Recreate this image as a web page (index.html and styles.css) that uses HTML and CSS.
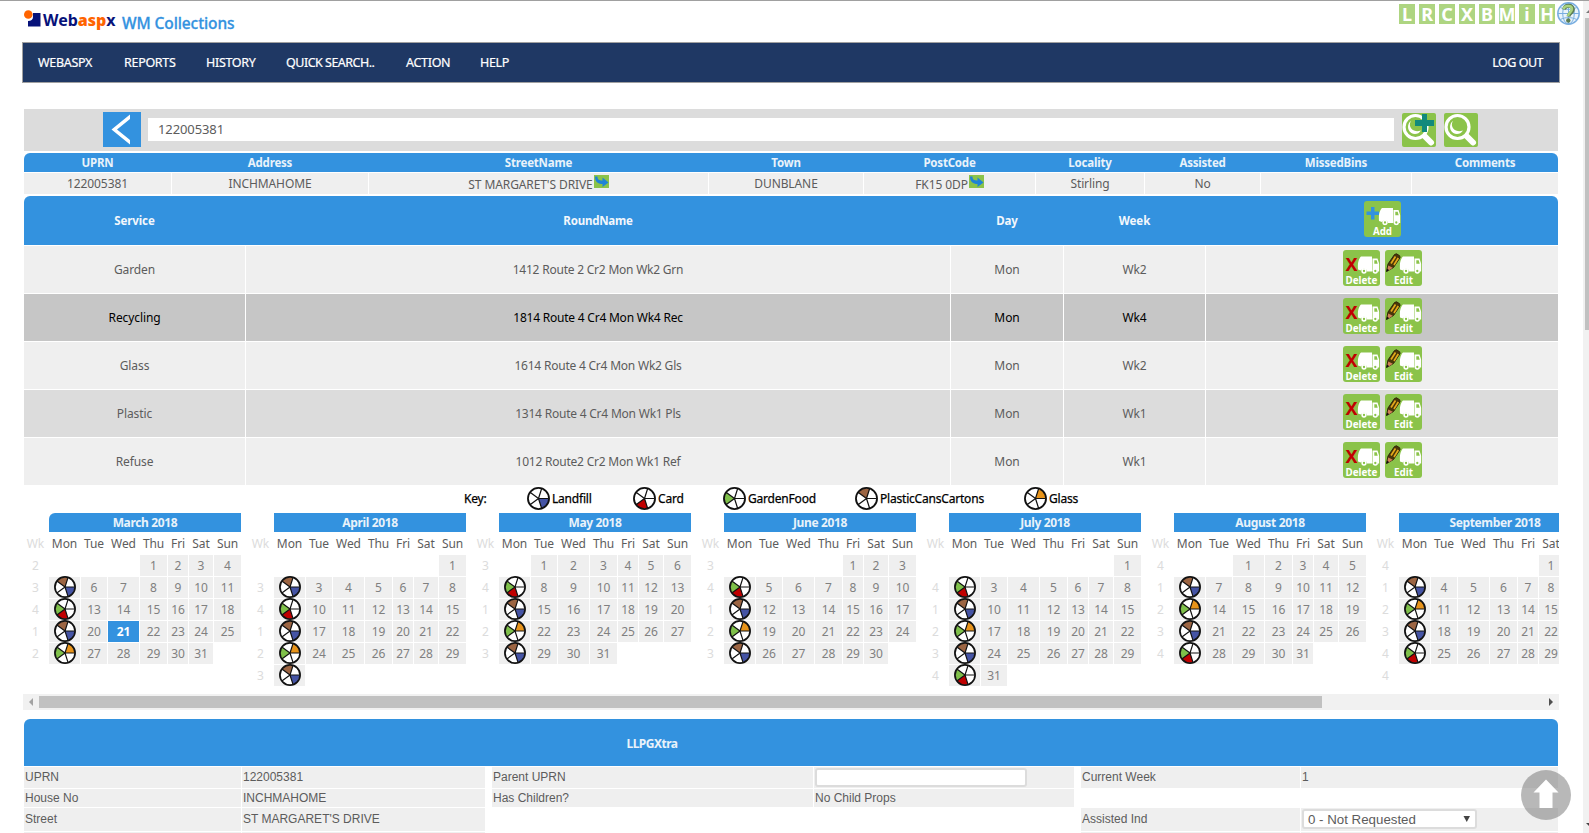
FILE: index.html
```html
<!DOCTYPE html>
<html lang="en">
<head>
<meta charset="utf-8">
<title>WM Collections</title>
<link rel="stylesheet" href="styles.css">
</head>
<body>
<svg class="defs" aria-hidden="true">
  <symbol id="truck" viewBox="0 0 22 18">
    <path d="M3.500.5H14.500V15.500H9.500a3.200 3.200 0 0 0-6-1L.5 13.500C-.2 9 .8 3 3.500.5z" fill="#fff"/>
    <path d="M15 2.500h5l1.800 5.500v7.500h-1.300a3 3 0 0 0-5.500 0z" fill="#fff"/>
    <path d="M16.800 4.300h2.400l1 3.400h-3.400z" fill="#8bc34a"/>
    <circle cx="6.500" cy="15" r="1.900" fill="#8bc34a" stroke="#fff" stroke-width="1.500"/>
    <circle cx="17.800" cy="15" r="1.900" fill="#8bc34a" stroke="#fff" stroke-width="1.500"/>
  </symbol>
  <symbol id="pencil" viewBox="0 0 16 20">
    <path d="M1 18.500L2.500 11 9 1.500 11 .8l3.200 2 .3 2L8 14.500z" fill="#4a3608" stroke="#30250a"/>
    <path d="M5.500 10.500l4.500-7M8.500 12l4.300-7" stroke="#e2a81b" stroke-width="1.700"/>
    <path d="M2.700 12.500l4.600 2.300-4 2.600-1.300-.8z" fill="#d08055"/>
    <path d="M1 18.800l.6-3 2 1.300z" fill="#111"/>
  </symbol>
  <symbol id="seg-l" viewBox="0 0 24 24"><path d="M12 12H22.500A10.500 10.500 0 0 1 15.200 22z" fill="#4554a5"/></symbol>
  <symbol id="seg-c" viewBox="0 0 24 24"><path d="M12 12L15.200 22A10.500 10.500 0 0 1 3.500 18.200z" fill="#c00000"/></symbol>
  <symbol id="seg-f" viewBox="0 0 24 24"><path d="M12 12L3.500 18.200A10.500 10.500 0 0 1 3.500 5.800z" fill="#7fc04a"/></symbol>
  <symbol id="seg-p" viewBox="0 0 24 24"><path d="M12 12L3.500 5.800A10.500 10.500 0 0 1 15.200 2z" fill="#9c6543"/></symbol>
  <symbol id="seg-g" viewBox="0 0 24 24"><path d="M12 12L15.200 2A10.500 10.500 0 0 1 22.500 12z" fill="#e8941a"/></symbol>
  <symbol id="wheel" viewBox="0 0 24 24">
    <path d="M12 12H22.500M12 12L15.200 2M12 12L3.500 5.800M12 12L3.500 18.200M12 12L15.200 22" stroke="#111" stroke-width="1.300"/>
    <circle cx="12" cy="12" r="11" fill="none" stroke="#111" stroke-width="1.900"/>
  </symbol>
  <symbol id="lens" viewBox="0 0 34 34">
    <path d="M21.500 22l7.500 7.500" stroke="#fff" stroke-width="6" stroke-linecap="round"/>
    <circle cx="13.500" cy="14" r="11.500" fill="#8bc34a" stroke="#fff" stroke-width="3.200"/>
    <path d="M9 8c-3 4 0 12.500 10 9.500-3 5-10 4.500-12.300-.5C5.500 14 6 10 9 8z" fill="#fff"/>
  </symbol>
  <symbol id="jump" viewBox="0 0 15 13">
    <path d="M0 0h15v13H0z" fill="#8bc34a"/>
    <path d="M1 1.500h2.500c0 3 1.500 4 5 4V2.500l6 5-6 4.500V9C4 9 1 7 1 1.500z" fill="#1f83d6"/>
  </symbol>
</svg>

<div class="page">
  <header class="brand">
    <svg class="mark" width="17" height="17" viewBox="0 0 17 17"><path d="M9 3h7.500v13.500H4V11c3 0 5-1.500 5-4z" fill="#07127a"/><circle cx="4.300" cy="4.500" r="4.300" fill="#ff6400"/></svg>
    <span class="logo">Web<b>asp</b>x</span>
    <span class="product">WM Collections</span>
    <div class="tiles">
      <i>L</i><i>R</i><i>C</i><i>X</i><i>B</i><i>M</i><i>i</i><i>H</i>
      <svg width="23" height="23" viewBox="0 0 23 23"><circle cx="11.500" cy="11.500" r="10.700" fill="#e8f3fb" stroke="#79aee0" stroke-width="1.500"/><path d="M1 11.500h21M11.500 1v21M3.500 5.500c4 2.500 12 2.500 16 0M3.500 17.500c4-2.500 12-2.500 16 0" fill="none" stroke="#79aee0"/><ellipse cx="11.500" cy="11.500" rx="5.800" ry="10.500" fill="none" stroke="#79aee0"/><path d="M7 7.500C8 2.500 16 2.500 16 7.500c0 3-4 3.500-4.500 7" fill="none" stroke="#5d7d55" stroke-width="3.800"/><path d="M6.500 7C7.500 3 15 3 15 7c0 3-3.500 3.500-4 7" fill="none" stroke="#a9d37e" stroke-width="2.500"/><circle cx="11.300" cy="18.500" r="2.200" fill="#5d7d55"/></svg>
    </div>
  </header>

  <nav class="nav">
    <a class="n1">WEBASPX</a><a class="n2">REPORTS</a><a class="n3">HISTORY</a><a class="n4">QUICK SEARCH..</a><a class="n5">ACTION</a><a class="n6">HELP</a><a class="out">LOG OUT</a>
  </nav>

  <div class="search">
    <div class="back"><svg width="38" height="35" viewBox="0 0 38 35"><path d="M27 2.500v4.500L14 17.500 27 28v4.500L8.500 17.500z" fill="#fff"/></svg></div>
    <div class="field">122005381</div>
    <svg class="sq first" width="34" height="34"><use href="#lens"/><path d="M20 1h5v6h7v6h-7v6h-5v-6h-7V7h7z" fill="#128a7c"/></svg>
    <svg class="sq second" width="34" height="34"><use href="#lens"/></svg>
  </div>

  <div class="prop head"><span>UPRN</span><span>Address</span><span>StreetName</span><span>Town</span><span>PostCode</span><span>Locality</span><span>Assisted</span><span>MissedBins</span><span>Comments</span></div>
  <div class="prop vals"><span>122005381</span><span>INCHMAHOME</span><span>ST MARGARET'S DRIVE<svg width="15" height="13"><use href="#jump"/></svg></span><span>DUNBLANE</span><span>FK15 0DP<svg width="15" height="13"><use href="#jump"/></svg></span><span>Stirling</span><span>No</span><span></span><span></span></div>

  <div class="svc top"><span>Service</span><span>RoundName</span><span>Day</span><span>Week</span><span class="acts"><svg class="btn" width="37" height="36" viewBox="0 0 37 36"><path d="M7 6h3.500v4.500H15V14h-4.500v4.500H7V14H2.500v-3.500H7z" fill="#3392df"/><use href="#truck" x="14.500" y="6.500" width="22" height="18"/><text x="18.500" y="34" textLength="19" lengthAdjust="spacingAndGlyphs">Add</text></svg></span></div>
  <div id="services"></div>

  <div class="key" id="key"><strong>Key:</strong></div>
  <div class="months" id="months"></div>
  <div class="hbar"><svg width="16" height="16"><path d="M10 4v8L6 8z" fill="#a3a3a3"/></svg><div class="thumb"></div><svg class="right" width="16" height="16"><path d="M6 4v8l4-4z" fill="#505050"/></svg></div>

  <section class="xtra">
    <h2>LLPGXtra</h2>
    <div class="cols">
      <div class="tbl t1"><span>UPRN</span><span>122005381</span><span>House No</span><span>INCHMAHOME</span><span>Street</span><span>ST MARGARET'S DRIVE</span><span></span><span></span></div>
      <div class="tbl t2"><span>Parent UPRN</span><span><input type="text" aria-label="Parent UPRN"></span><span>Has Children?</span><span>No Child Props</span></div>
      <div class="tbl t3"><span>Current Week</span><span>1</span><span class="none"></span><span class="none"></span><span>Assisted Ind</span><span><div class="select">0 - Not Requested<svg width="8" height="7"><path d="M.5 0h6.500L3.750 6z" fill="#444"/></svg></div></span><span></span><span></span></div>
    </div>
  </section>
</div>

<div class="totop"><svg width="50" height="50" viewBox="0 0 50 50"><path d="M25 9.500L37.500 22.500h-6V38h-13V22.500h-6z" fill="#fff"/></svg></div>
<div class="vbar"><svg width="6" height="17"><path d="M3 12l3-3v3z" fill="#777"/></svg><div class="vthumb"></div><svg width="6" height="17"><path d="M3 7h3v3z" fill="#444"/></svg></div>
<script src="app.js"></script>
</body>
</html>
```

FILE: styles.css
```css
* { box-sizing: border-box; }
body { margin: 0; width: 1589px; height: 833px; overflow: hidden; background: #fff; border-top: 1px solid #a0a0a0; font: 12px/16px "Noto Sans", sans-serif; color: #5c5c5c; letter-spacing: -0.1px; }
svg { display: block; flex: none; }
.defs { position: absolute; width: 0; height: 0; }
.page { width: 1534px; margin-left: 24px; }

.brand { display: flex; height: 41px; width: 1556px; }
.mark { margin-top: 9px; }
.logo { margin: 8px 0 0 2px; width: 73px; font: bold 16px/22px "Noto Sans", sans-serif; color: #07127a; letter-spacing: 0; }
.logo b { color: #ff6400; }
.product { margin: 11px 0 0 6px; white-space: nowrap; font: 500 15.500px/22px "Noto Sans", sans-serif; color: #3392df; letter-spacing: -0.1px; -webkit-text-stroke: 0.3px #3392df; }
.tiles { display: flex; gap: 4px; margin: 3px 0 0 auto; }
.tiles i { width: 16px; height: 20px; background: #aed581; color: #fff; font: bold 18px/20px "Noto Sans", sans-serif; text-align: center; display: flex; justify-content: center; }
.tiles svg { margin: -2px 0 0 -2px; }

.nav { display: flex; align-items: center; width: 1538px; height: 41px; margin-left: -2px; border: 1px solid #a0a0a0; background: #1f3864; color: #fff; font-size: 12.500px; padding: 0 16px 0 15px; white-space: nowrap; -webkit-text-stroke: 0.2px #fff; letter-spacing: -0.3px; }
.n1 { width: 86px; } .n2 { width: 82px; } .n3 { width: 80px; } .n4 { width: 120px; letter-spacing: -0.5px; } .n5 { width: 74px; }
.out { margin-left: auto; letter-spacing: -0.5px; }

.search { display: flex; height: 42px; margin-top: 26px; background: #dcdcdc; }
.back { width: 38px; height: 35px; margin: 3px 0 0 79px; background: #3392df; }
.field { width: 1246px; height: 23px; margin: 9px 0 0 7px; padding: 0 10px; background: #fff; font-size: 13px; line-height: 22px; }
.sq { margin-top: 4px; background: #8bc34a; border-radius: 2px; }
.first { margin-left: 8px; }
.second { margin-left: 8px; }

.prop { display: grid; grid-template-columns: 147px 196px 339px 154px 171px 108px 115px 150px 146px; gap: 1px; text-align: center; }
.head { height: 19px; margin-top: 2px; background: #3392df; border-radius: 6px 6px 0 0; color: #e9f2fa; font-weight: bold; font-size: 11.500px; line-height: 20px; letter-spacing: -0.2px; }
.vals { height: 21px; margin-top: 1px; grid-template-rows: 21px; }
.vals span { background: #efefef; line-height: 21px; display: flex; justify-content: center; }
.vals span:has(svg) { line-height: 24px; }
.vals svg { margin: 2px 0 0 1px; }

.svc { display: grid; grid-template-columns: 221px 704px 112px 141px 352px; grid-template-rows: 100%; gap: 1px; height: 47px; margin-top: 1px; text-align: center; line-height: 48px; }
.svc > span:nth-child(2) { letter-spacing: -0.22px; }
.svc > span { background: #efefef; }
.svc.grey > span { background: #dcdcdc; }
.svc.sel > span { background: #c6c6c6; color: #000; }
.svc.top { height: 49px; margin-top: 2px; background: #3392df; border-radius: 6px 6px 0 0; color: #f2f7fc; font-weight: bold; font-size: 11.500px; line-height: 50px; }
.svc.top > span { background: none; }
.svc .acts { display: flex; justify-content: center; gap: 5px; padding-top: 4px; }
.btn { background: #8bc34a; border-radius: 3px; }
.btn text { font: bold 10.500px "Noto Sans", sans-serif; fill: #fff; text-anchor: middle; letter-spacing: 0; }
.btn .x { font: bold 18px "Noto Sans", sans-serif; fill: #c00000; }
.svc.top .acts { padding-top: 5px; }

.key { display: flex; align-items: center; height: 27px; margin-bottom: 1px; padding-left: 440px; color: #000; -webkit-text-stroke: 0.25px #000; letter-spacing: -0.2px; }
.key strong { font-weight: 400; width: 63px; }
.key span { display: flex; align-items: center; gap: 2px; white-space: nowrap; }

.months { display: flex; width: 1535px; height: 181px; overflow: hidden; }
.month { flex: none; width: 225px; display: grid; grid-template-columns: 24px 31px 26px 31px 27px 20px 24px 27px; grid-template-rows: 19px 21px repeat(6, 21px); gap: 1px; text-align: center; line-height: 22px; color: #808080; }
.month h3 { grid-column: 2 / 9; margin: 0; background: #3392df; color: #e9f2fa; font: bold 12px/20px "Noto Sans", sans-serif; letter-spacing: -0.35px; }
.month:first-child h3 { border-radius: 6px 0 0 0; }
.month .dow { color: #5c5c5c; line-height: 22px; letter-spacing: -0.1px; }
.month .wk { color: #dcdcdc; padding-right: 1px; }
.month .d { background: #efefef; }
.month .today { background: #3392df; color: #fff; font-weight: bold; }
.d svg { margin: -1px 0 0 5px; }

.hbar { display: flex; width: 1536px; height: 16px; margin-left: -1px; background: #f1f1f1; }
.thumb { width: 1283px; height: 12px; margin-top: 2px; background: #c1c1c1; }
.right { margin-left: auto; }

.xtra { margin-top: 9px; font: 12px/20px "Liberation Sans", Arial, sans-serif; letter-spacing: 0; }
.xtra h2 { margin: 0; height: 47px; padding-right: 278px; background: #3392df; border-radius: 6px 6px 0 0; color: #e9f2fa; text-align: center; font: bold 12px/49px "Noto Sans", sans-serif; letter-spacing: -0.5px; }
.cols { display: flex; margin-top: 1px; }
.tbl { display: grid; grid-template-rows: 21px 18px 23px 10px; gap: 1px; }
.tbl > span { background: #efefef; padding-left: 1px; }
.tbl > span:nth-child(3), .tbl > span:nth-child(4) { line-height: 19px; }
.tbl > span:nth-child(5), .tbl > span:nth-child(6) { line-height: 22px; }
.tbl > .none { background: none; }
.t1 { grid-template-columns: 217px 243px; }
.t2 { grid-template-columns: 321px 260px; margin-left: 7px; }
.t3 { grid-template-columns: 219px 257px; margin-left: 7px; }
.tbl input { display: block; width: 212px; height: 19px; margin: 1px 0 0; border: 2px solid #dcdcdc; border-radius: 3px; background: #fff; }
.select { display: flex; align-items: center; justify-content: space-between; width: 175px; height: 20px; margin: 1px 0 0; padding: 1px 4px 0 4px; border: 2px solid #dcdcdc; border-radius: 3px; background: #fff; font-size: 13.300px; line-height: 18px; }

.totop { position: absolute; left: 1521px; top: 770px; width: 50px; height: 50px; border-radius: 50%; background: rgba(120, 120, 120, 0.530); }
.vbar { position: absolute; left: 1583px; top: 1px; width: 6px; height: 832px; background: #f1f1f1; display: flex; flex-direction: column; }
.vthumb { width: 4px; height: 312px; margin: 0 0 auto 2px; background: #c1c1c1; }
```

FILE: app.js
```js
const truck = '<use href="#truck" x="14.500" y="6" width="22" height="18"/>';
const services = [
  ['Garden', '1412 Route 2 Cr2 Mon Wk2 Grn', 'Wk2', ''],
  ['Recycling', '1814 Route 4 Cr4 Mon Wk4 Rec', 'Wk4', 'sel'],
  ['Glass', '1614 Route 4 Cr4 Mon Wk2 Gls', 'Wk2', ''],
  ['Plastic', '1314 Route 4 Cr4 Mon Wk1 Pls', 'Wk1', 'grey'],
  ['Refuse', '1012 Route2 Cr2 Mon Wk1 Ref', 'Wk1', '']
];
document.getElementById('services').innerHTML = services.map(([name, round, week, cls]) =>
  `<div class="svc ${cls}"><span>${name}</span><span>${round}</span><span>Mon</span><span>${week}</span><span class="acts">
  <svg class="btn" width="37" height="36" viewBox="0 0 37 36"><text class="x" x="8.500" y="20.500">X</text>${truck}<text x="18.500" y="34" textLength="32" lengthAdjust="spacingAndGlyphs">Delete</text></svg>
  <svg class="btn" width="37" height="36" viewBox="0 0 37 36"><use href="#pencil" x="0.500" y="3" width="16" height="20"/>${truck}<text x="18.500" y="34" textLength="19" lengthAdjust="spacingAndGlyphs">Edit</text></svg></span></div>`).join('');

const wheel = (segments, size) =>
  `<svg width="${size}" height="${size}" viewBox="0 0 24 24"><circle cx="12" cy="12" r="11" fill="#fff"/>${[...segments].map(s => `<use href="#seg-${s}"/>`).join('')}<use href="#wheel"/></svg>`;

const key = [['l', 'Landfill', 106], ['c', 'Card', 90], ['f', 'GardenFood', 132], ['p', 'PlasticCansCartons', 169], ['g', 'Glass', 60]];
document.getElementById('key').innerHTML += key.map(([seg, label, width]) =>
  `<span style="width:${width}px">${wheel(seg, 23)}${label}</span>`).join('');

// A = plastic + landfill, B = garden + card, C = garden + glass
const rounds = { A: 'pl', B: 'fc', C: 'fg' };
const months = [
  ['March 2018', 3, 31, '23412', 'ABAC'],
  ['April 2018', 6, 30, ' 34123', 'ABACA'],
  ['May 2018', 1, 31, '34123', 'BACA'],
  ['June 2018', 4, 30, '34123', 'BACA'],
  ['July 2018', 6, 31, ' 41234', 'BACAB'],
  ['August 2018', 2, 31, '41234', 'ACAB'],
  ['September 2018', 5, 30, '412344', 'ACAB']
];
document.getElementById('months').innerHTML = months.map(([title, start, days, weeks, icons], m) => {
  let html = `<div class="month"><i></i><h3>${title}</h3><span class="dow wk">Wk</span>`;
  html += ['Mon', 'Tue', 'Wed', 'Thu', 'Fri', 'Sat', 'Sun'].map(d => `<span class="dow">${d}</span>`).join('');
  let icon = 0;
  for (let r = 0; r < 6; r++) {
    html += `<span class="wk">${weeks[r] || ''}</span>`;
    for (let c = 0; c < 7; c++) {
      const day = r * 7 + c - start + 1;
      if (day < 1 || day > days) html += '<span></span>';
      else if (c === 0) html += `<span class="d">${wheel(rounds[icons[icon++]], 22)}</span>`;
      else html += `<span class="d${m === 0 && day === 21 ? ' today' : ''}">${day}</span>`;
    }
  }
  return html + '</div>';
}).join('');
```
